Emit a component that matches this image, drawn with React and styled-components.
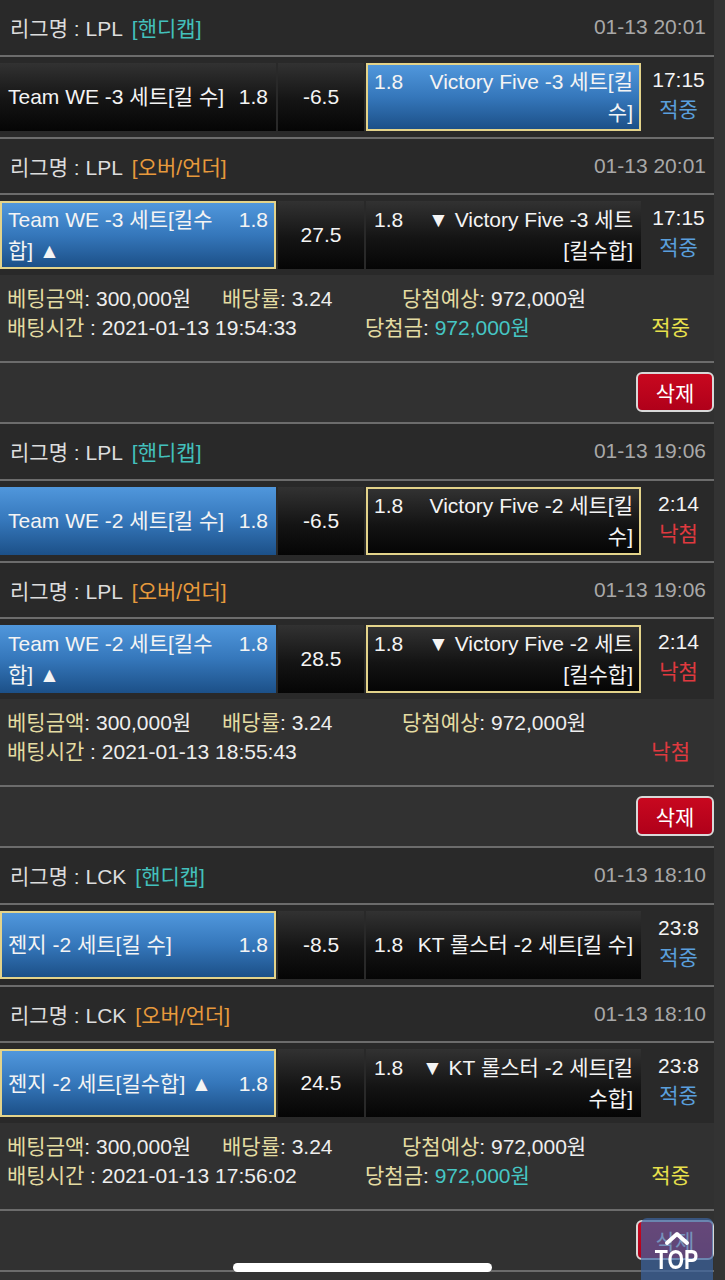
import styled, { createGlobalStyle } from "styled-components";

const GlobalStyle = createGlobalStyle`
  html, body {
    margin: 0;
    padding: 0;
    background: #333333;
    overflow: hidden;
  }
  body {
    font-family: "Liberation Sans", "Noto Sans CJK KR", sans-serif;
    color: #eeeeee;
  }
`;

const slips = [
  {
    games: [
      {
        league: "LPL",
        type: "handi",
        date: "01-13 20:01",
        home: { name: "Team WE -3 세트[킬 수]", odds: "1.8" },
        away: { name: "Victory Five -3 세트[킬 수]", odds: "1.8", win: true, picked: true },
        line: "-6.5",
        score: "17:15",
        result: "hit",
      },
      {
        league: "LPL",
        type: "ou",
        date: "01-13 20:01",
        home: { name: "Team WE -3 세트[킬수합] ▲", odds: "1.8", win: true, picked: true },
        away: { name: "▼ Victory Five -3 세트[킬수합]", odds: "1.8" },
        line: "27.5",
        score: "17:15",
        result: "hit",
      },
    ],
    time: "2021-01-13 19:54:33",
    won: true,
  },
  {
    games: [
      {
        league: "LPL",
        type: "handi",
        date: "01-13 19:06",
        home: { name: "Team WE -2 세트[킬 수]", odds: "1.8", win: true },
        away: { name: "Victory Five -2 세트[킬 수]", odds: "1.8", picked: true },
        line: "-6.5",
        score: "2:14",
        result: "miss",
      },
      {
        league: "LPL",
        type: "ou",
        date: "01-13 19:06",
        home: { name: "Team WE -2 세트[킬수합] ▲", odds: "1.8", win: true },
        away: { name: "▼ Victory Five -2 세트[킬수합]", odds: "1.8", picked: true },
        line: "28.5",
        score: "2:14",
        result: "miss",
      },
    ],
    time: "2021-01-13 18:55:43",
    won: false,
  },
  {
    games: [
      {
        league: "LCK",
        type: "handi",
        date: "01-13 18:10",
        home: { name: "젠지 -2 세트[킬 수]", odds: "1.8", win: true, picked: true },
        away: { name: "KT 롤스터 -2 세트[킬 수]", odds: "1.8" },
        line: "-8.5",
        score: "23:8",
        result: "hit",
      },
      {
        league: "LCK",
        type: "ou",
        date: "01-13 18:10",
        home: { name: "젠지 -2 세트[킬수합] ▲", odds: "1.8", win: true, picked: true },
        away: { name: "▼ KT 롤스터 -2 세트[킬수합]", odds: "1.8" },
        line: "24.5",
        score: "23:8",
        result: "hit",
      },
    ],
    time: "2021-01-13 17:56:02",
    won: true,
  },
];

export default function App() {
  return (
    <Page>
      <GlobalStyle />
      <List>
        {slips.map((slip, i) => (
          <Slip key={i}>
            {slip.games.map((g, j) => (
              <div key={j}>
                <LeagueHeader>
                  <span>
                    리그명 : {g.league}
                    <TypeTag $type={g.type}>{g.type === "handi" ? "[핸디캡]" : "[오버/언더]"}</TypeTag>
                  </span>
                  <DateText>{g.date}</DateText>
                </LeagueHeader>
                <GameRow $last={j === slip.games.length - 1}>
                  <TeamCell $win={g.home.win} $picked={g.home.picked}>
                    <TeamInner>
                      <OddsRight>{g.home.odds}</OddsRight>
                      {g.home.name}
                    </TeamInner>
                  </TeamCell>
                  <LineCell>{g.line}</LineCell>
                  <TeamCell $win={g.away.win} $picked={g.away.picked}>
                    <TeamInner $away>
                      <OddsLeft>{g.away.odds}</OddsLeft>
                      {g.away.name}
                    </TeamInner>
                  </TeamCell>
                  <ResultCell>
                    <span>{g.score}</span>
                    <ResultText $hit={g.result === "hit"}>{g.result === "hit" ? "적중" : "낙첨"}</ResultText>
                  </ResultCell>
                </GameRow>
              </div>
            ))}
            <Info>
              <InfoLine>
                <InfoItem $w={215}>
                  <Label>베팅금액</Label>: 300,000원
                </InfoItem>
                <InfoItem $w={180}>
                  <Label>배당률</Label>: 3.24
                </InfoItem>
                <InfoItem>
                  <Label>당첨예상</Label>: 972,000원
                </InfoItem>
              </InfoLine>
              <InfoLine>
                <InfoItem $w={358}>
                  <Label>배팅시간</Label> : {slip.time}
                </InfoItem>
                <InfoItem $grow>
                  {slip.won && (
                    <>
                      <Label>당첨금</Label>: <Payout>972,000원</Payout>
                    </>
                  )}
                </InfoItem>
                <Status $won={slip.won}>{slip.won ? "적중" : "낙첨"}</Status>
              </InfoLine>
            </Info>
            <Actions>
              <DeleteButton>삭제</DeleteButton>
            </Actions>
          </Slip>
        ))}
      </List>
      <TopButton>
        <svg width="30" height="16" viewBox="0 0 30 16">
          <path d="M5 13 L15 4 L25 13" fill="none" stroke="#fff" strokeWidth="4" strokeLinecap="round" strokeLinejoin="round" />
        </svg>
        <TopLabel>TOP</TopLabel>
      </TopButton>
      <HomeBar />
    </Page>
  );
}

const Page = styled.div`
  width: 725px;
  height: 1280px;
  overflow: hidden;
  background: #333333;
`;

const List = styled.div`
  width: 714px;
`;

const Slip = styled.section`
  display: flex;
  flex-direction: column;
`;

const LeagueHeader = styled.div`
  height: 54.5px;
  display: flex;
  align-items: center;
  justify-content: space-between;
  padding: 0 8px 0 10px;
  background: #292929;
  border-bottom: 2px solid #6c6c6c;
  font-size: 21px;
  color: #dddddd;
`;

const TypeTag = styled.span`
  margin-left: 9px;
  color: ${(p) => (p.$type === "handi" ? "#43c0bc" : "#e79a3c")};
`;

const DateText = styled.span`
  color: #a8a8a8;
`;

const GameRow = styled.div`
  box-sizing: border-box;
  padding: 6px 0;
  display: grid;
  grid-template-columns: 276px 86px 275px 71px;
  column-gap: 2px;
  background: #292929;
  border-bottom: ${(p) => (p.$last ? "none" : "2px solid #6c6c6c")};
  height: ${(p) => (p.$last ? "80px" : "82px")};
  font-size: 21px;
`;

const TeamCell = styled.div`
  box-sizing: border-box;
  display: flex;
  align-items: center;
  padding: 0 ${(p) => (p.$picked ? "6px" : "8px")};
  border: ${(p) => (p.$picked ? "2px solid #e3d38a" : "none")};
  background: ${(p) =>
    p.$win
      ? "linear-gradient(to bottom, #5097dc 0%, #3577bb 50%, #1c5088 100%)"
      : "linear-gradient(to bottom, #323232 0%, #141414 55%, #050505 100%)"};
  color: #f4f4f4;
  line-height: 31px;
`;

const TeamInner = styled.div`
  width: 100%;
  text-align: ${(p) => (p.$away ? "right" : "left")};
`;

const OddsRight = styled.span`
  float: right;
  margin-left: 14px;
`;

const OddsLeft = styled.span`
  float: left;
  margin-right: 14px;
`;

const LineCell = styled.div`
  display: flex;
  align-items: center;
  justify-content: center;
  background: linear-gradient(to bottom, #323232 0%, #141414 55%, #050505 100%);
  color: #f4f4f4;
`;

const ResultCell = styled.div`
  display: flex;
  flex-direction: column;
  align-items: center;
  justify-content: center;
  line-height: 30px;
  color: #f4f4f4;
  padding-bottom: 4px;
`;

const ResultText = styled.span`
  color: ${(p) => (p.$hit ? "#5a9fdc" : "#e0393f")};
`;

const Info = styled.div`
  box-sizing: border-box;
  padding: 9px 0 0 7px;
  background: #313131;
  border-bottom: 2px solid #6c6c6c;
  height: 88px;
  font-size: 21px;
  line-height: 29px;
`;

const InfoLine = styled.div`
  display: flex;
  align-items: center;
`;

const InfoItem = styled.span`
  width: ${(p) => (p.$w ? `${p.$w}px` : "auto")};
  flex: ${(p) => (p.$grow ? "1" : "none")};
  color: #eeeeee;
  white-space: nowrap;
`;

const Label = styled.span`
  color: #e4dca2;
`;

const Payout = styled.span`
  color: #46c6c4;
`;

const Status = styled.span`
  width: 61px;
  padding-right: 24px;
  text-align: right;
  color: ${(p) => (p.$won ? "#e8e04c" : "#e0393f")};
`;

const Actions = styled.div`
  height: 61px;
  box-sizing: border-box;
  display: flex;
  justify-content: flex-end;
  align-items: flex-start;
  padding-top: 9px;
  background: #313131;
  border-bottom: 2px solid #6c6c6c;
`;

const DeleteButton = styled.button`
  width: 78px;
  height: 40px;
  box-sizing: border-box;
  border: 2px solid #d8d8d8;
  border-radius: 6px;
  background: linear-gradient(to bottom, #c8081f 0%, #b0001a 100%);
  color: #ffffff;
  font-family: "Liberation Sans", "Noto Sans CJK KR", sans-serif;
  font-size: 21px;
  padding: 0;
`;

const TopButton = styled.div`
  position: fixed;
  left: 641px;
  top: 1218px;
  width: 72px;
  height: 70px;
  border-radius: 6px;
  background: rgba(60, 100, 160, 0.7);
  display: flex;
  flex-direction: column;
  align-items: center;
  padding-top: 12px;
  box-sizing: border-box;
  color: #ffffff;
  svg {
    display: block;
  }
`;

const TopLabel = styled.span`
  display: block;
  font-family: "Liberation Sans", sans-serif;
  font-weight: bold;
  font-size: 28px;
  line-height: 28px;
  transform: scaleX(0.76);
`;

const HomeBar = styled.div`
  position: fixed;
  left: 233px;
  top: 1263px;
  width: 259px;
  height: 9px;
  border-radius: 5px;
  background: #ffffff;
`;
